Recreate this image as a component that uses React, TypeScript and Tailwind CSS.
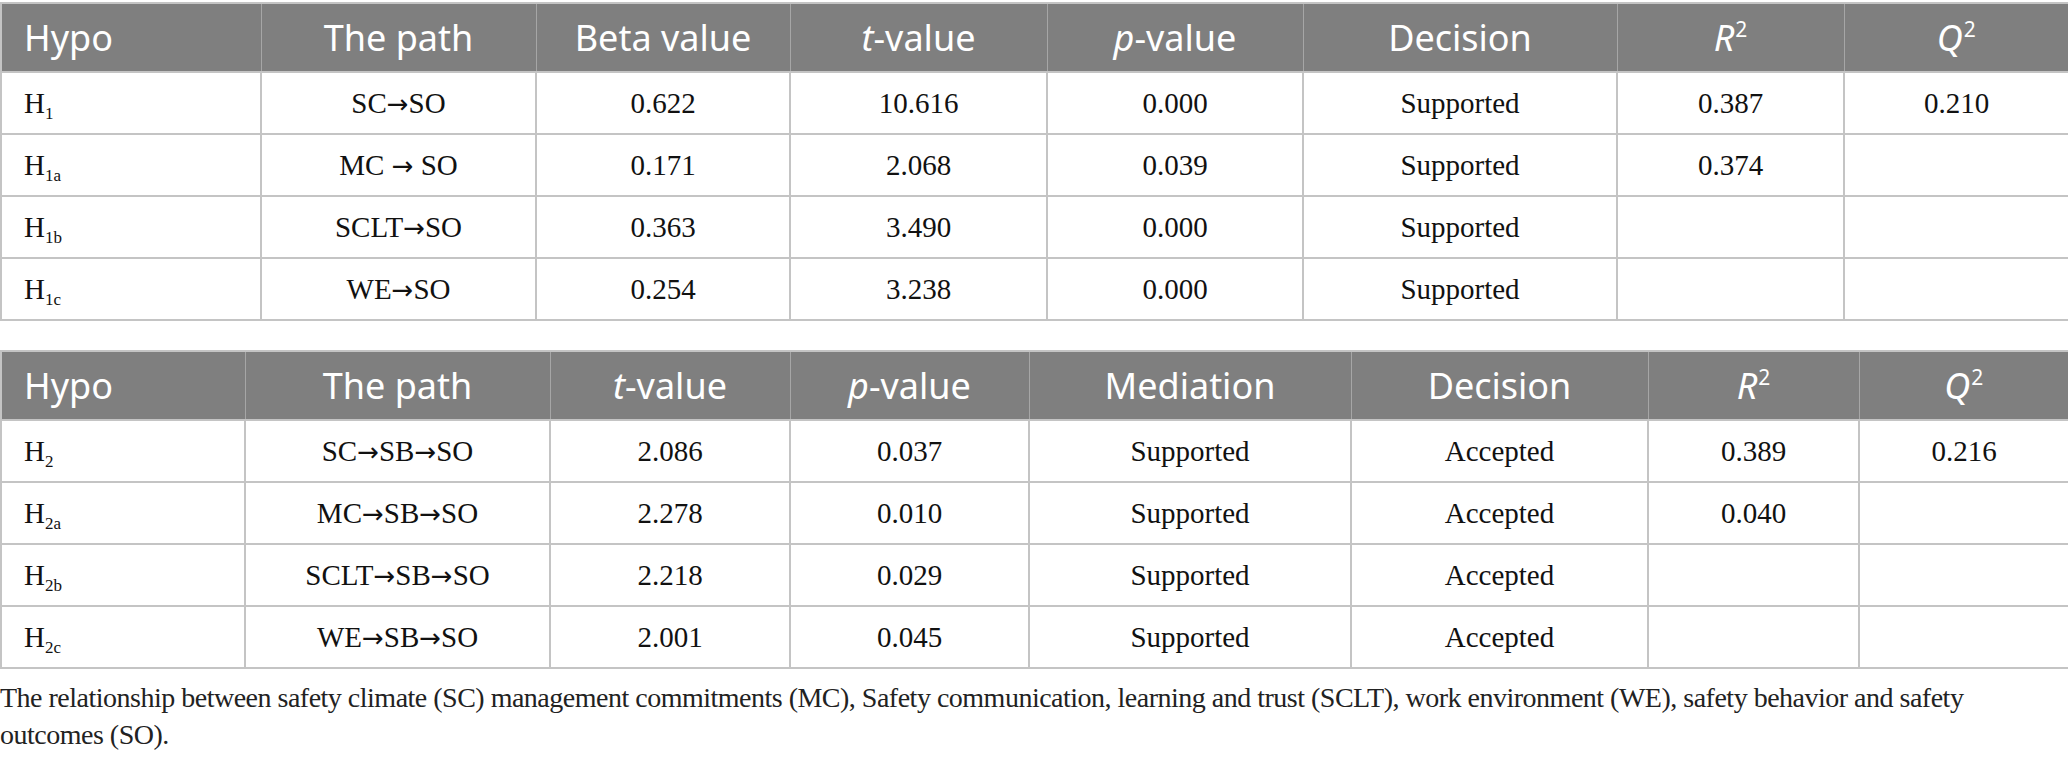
import React from 'react';

type Cell = React.ReactNode;

const serif = "font-['Liberation_Serif','Times_New_Roman',serif]";

const H = ({ sub }: { sub: string }) => (
  <span>
    H<sub className="text-[17px] -bottom-[6px]">{sub}</sub>
  </span>
);

const Sq = ({ l }: { l: string }) => (
  <span>
    <i>{l}</i>
    <sup className="text-[21px] not-italic -top-[14px] ml-[1px]">2</sup>
  </span>
);

// arrow glyph from DejaVu, tighter and wider than the Liberation one
const Path = ({ text }: { text: string }) => {
  const parts = text.split('→');
  return (
    <span>
      {parts.map((p, i) => (
        <React.Fragment key={i}>
          {i > 0 && <span className="font-['DejaVu_Sans',sans-serif] text-[26px]">→</span>}
          {p}
        </React.Fragment>
      ))}
    </span>
  );
};

const table1Head: Cell[] = [
  'Hypo',
  'The path',
  'Beta value',
  <span><i>t</i>-value</span>,
  <span><i>p</i>-value</span>,
  'Decision',
  <Sq l="R" />,
  <Sq l="Q" />,
];

const table1Rows: Cell[][] = [
  [<H sub="1" />, <Path text="SC→SO" />, '0.622', '10.616', '0.000', 'Supported', '0.387', '0.210'],
  [<H sub="1a" />, <Path text="MC → SO" />, '0.171', '2.068', '0.039', 'Supported', '0.374', ''],
  [<H sub="1b" />, <Path text="SCLT→SO" />, '0.363', '3.490', '0.000', 'Supported', '', ''],
  [<H sub="1c" />, <Path text="WE→SO" />, '0.254', '3.238', '0.000', 'Supported', '', ''],
];

const table2Head: Cell[] = [
  'Hypo',
  'The path',
  <span><i>t</i>-value</span>,
  <span><i>p</i>-value</span>,
  'Mediation',
  'Decision',
  <Sq l="R" />,
  <Sq l="Q" />,
];

const table2Rows: Cell[][] = [
  [<H sub="2" />, <Path text="SC→SB→SO" />, '2.086', '0.037', 'Supported', 'Accepted', '0.389', '0.216'],
  [<H sub="2a" />, <Path text="MC→SB→SO" />, '2.278', '0.010', 'Supported', 'Accepted', '0.040', ''],
  [<H sub="2b" />, <Path text="SCLT→SB→SO" />, '2.218', '0.029', 'Supported', 'Accepted', '', ''],
  [<H sub="2c" />, <Path text="WE→SB→SO" />, '2.001', '0.045', 'Supported', 'Accepted', '', ''],
];

function DataTable({ widths, head, rows }: { widths: string[]; head: Cell[]; rows: Cell[][] }) {
  return (
    <table className="w-full table-fixed border-collapse border-2 border-[#c4c4c4]">
      <colgroup>
        {widths.map((w, i) => (
          <col key={i} className={w} />
        ))}
      </colgroup>
      <thead>
        <tr className="bg-[#7f7f7f]">
          {head.map((h, i) => (
            <th
              key={i}
              className={`h-[69px] border-x border-[#a6a6a6] px-[22px] font-['Noto_Sans',sans-serif] text-[36px] font-normal leading-none text-white ${
                i === 0 ? 'text-left' : 'text-center'
              }`}
            >
              {h}
            </th>
          ))}
        </tr>
      </thead>
      <tbody>
        {rows.map((row, r) => (
          <tr key={r} className="border-t-2 border-[#c4c4c4]">
            {row.map((c, i) => (
              <td
                key={i}
                className={`h-[62px] border-x-2 border-[#c4c4c4] px-[22px] ${serif} text-[29px] leading-none text-[#111] ${
                  i === 0 ? 'text-left' : 'text-center'
                }`}
              >
                {c}
              </td>
            ))}
          </tr>
        ))}
      </tbody>
    </table>
  );
}

export default function App() {
  return (
    <div className="w-[2068px] bg-white pt-[2px]">
      <DataTable
        widths={['w-[260px]', 'w-[275px]', 'w-[254px]', 'w-[257px]', 'w-[256px]', 'w-[314px]', 'w-[227px]', 'w-[225px]']}
        head={table1Head}
        rows={table1Rows}
      />
      <div className="h-[29px]" />
      <DataTable
        widths={['w-[244px]', 'w-[305px]', 'w-[240px]', 'w-[239px]', 'w-[322px]', 'w-[297px]', 'w-[211px]', 'w-[210px]']}
        head={table2Head}
        rows={table2Rows}
      />
      <p className={`mt-[10px] max-w-[2010px] ${serif} text-[28px] leading-[37px] tracking-[-0.5px] text-[#222]`}>
        The relationship between safety climate (SC) management commitments (MC), Safety communication, learning and trust
        (SCLT), work environment (WE), safety behavior and safety outcomes (SO).
      </p>
    </div>
  );
}
